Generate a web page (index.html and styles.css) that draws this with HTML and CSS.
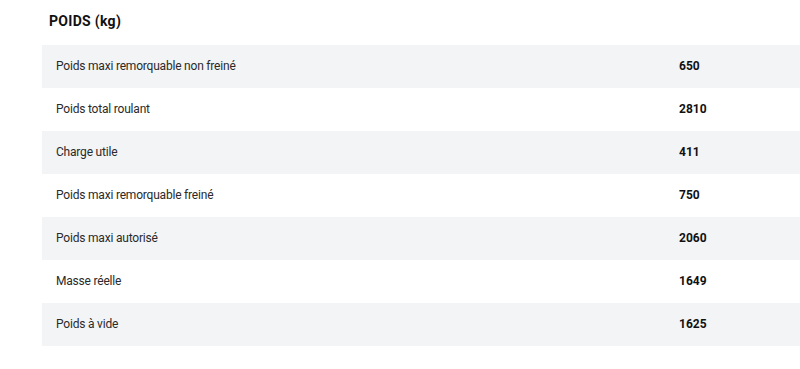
FILE: index.html
```html
<!DOCTYPE html>
<html lang="fr">
<head>
<meta charset="utf-8">
<title>Poids</title>
<link rel="stylesheet" href="styles.css">
</head>
<body>
<section class="specs">
  <h2 class="specs-title">POIDS (kg)</h2>
  <div class="specs-table">
    <div class="row alt"><span class="label">Poids maxi remorquable non freiné</span><span class="value">650</span></div>
    <div class="row"><span class="label">Poids total roulant</span><span class="value">2810</span></div>
    <div class="row alt"><span class="label">Charge utile</span><span class="value">411</span></div>
    <div class="row"><span class="label">Poids maxi remorquable freiné</span><span class="value">750</span></div>
    <div class="row alt"><span class="label">Poids maxi autorisé</span><span class="value">2060</span></div>
    <div class="row"><span class="label">Masse réelle</span><span class="value">1649</span></div>
    <div class="row alt"><span class="label">Poids à vide</span><span class="value">1625</span></div>
  </div>
</section>
</body>
</html>
```
FILE: styles.css
```css
html, body {
  margin: 0;
  padding: 0;
  background: #ffffff;
}
body {
  font-family: Roboto, "Noto Sans", sans-serif;
  color: #1b1b1b;
}
.specs {
  padding-left: 42px;
}
.specs-title {
  margin: 0;
  height: 45px;
  padding-left: 7px;
  font-size: 14px;
  font-weight: 700;
  letter-spacing: 0.3px;
  line-height: 42px;
  color: #111;
}
.specs-table {
  display: flex;
  flex-direction: column;
}
.row {
  display: grid;
  grid-template-columns: 637px 1fr;
  height: 43px;
  align-items: center;
  font-size: 12px;
  padding-bottom: 1px;
  box-sizing: border-box;
}
.row.alt {
  background: #f3f4f6;
}
.label {
  padding-left: 14px;
  letter-spacing: -0.2px;
  color: #2a2a2a;
}
.value {
  font-weight: 700;
  font-size: 12px;
  color: #111;
}
```
